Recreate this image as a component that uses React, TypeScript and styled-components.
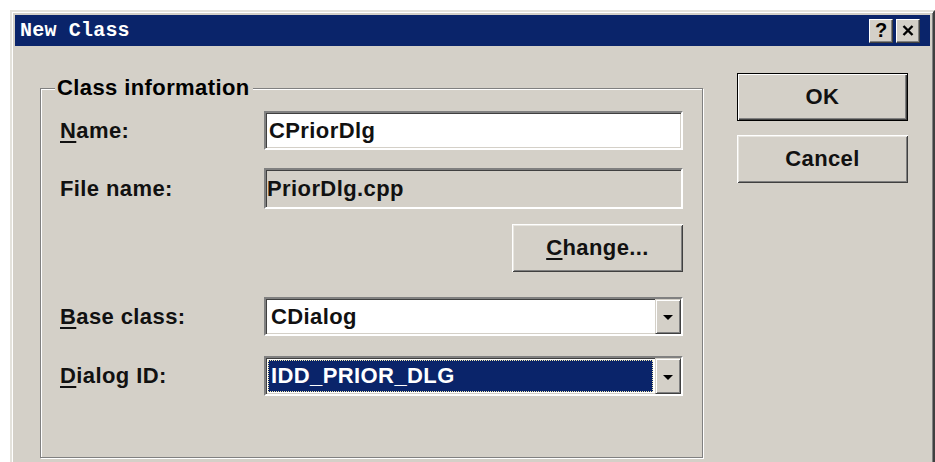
import * as React from "react";
import styled, { createGlobalStyle } from "styled-components";

const GlobalStyle = createGlobalStyle`
  html, body {
    margin: 0;
    padding: 0;
    background: #ffffff;
    overflow: hidden;
  }
  body {
    font-family: "Liberation Sans", Arial, sans-serif;
  }
`;

const Window = styled.div`
  box-sizing: border-box;
  margin: 10px 0 0 10px;
  width: 925px;
  height: 480px;
  padding: 3px;
  background: #d4d0c8;
  border: 2px solid;
  border-color: #e4e2dc #404040 #404040 #e4e2dc;
  box-shadow: inset 1px 1px 0 #ffffff, inset -1px -1px 0 #808080;
`;

const TitleBar = styled.div`
  display: flex;
  align-items: center;
  height: 31px;
  padding: 0 10px 0 5px;
  background: #0a246a;
`;

const Title = styled.div`
  flex: 1;
  font-family: "Liberation Mono", "Courier New", monospace;
  font-weight: bold;
  font-size: 20px;
  color: #ffffff;
  letter-spacing: 0.2px;
`;

const CaptionButtons = styled.div`
  display: flex;
  gap: 3px;
`;

const CaptionButton = styled.div`
  box-sizing: border-box;
  width: 24px;
  height: 24px;
  display: flex;
  align-items: center;
  justify-content: center;
  background: #d4d0c8;
  border: 1px solid;
  border-color: #ffffff #404040 #404040 #ffffff;
  box-shadow: inset -1px -1px 0 #808080;
  font-family: "Liberation Sans", Arial, sans-serif;
  font-weight: bold;
  font-size: 20px;
  color: #000;
`;

const Body = styled.div`
  display: flex;
  align-items: flex-start;
  gap: 34px;
  padding: 27px 20px 0 25px;
`;

const Group = styled.fieldset`
  box-sizing: border-box;
  margin: 4px 0 0 0;
  width: 663px;
  min-width: 0;
  padding: 12px 19px 61px 19px;
  border: 1px solid #808080;
  box-shadow: inset 1px 1px 0 #ffffff, 1px 1px 0 #ffffff;
`;

const Legend = styled.legend`
  margin-left: -5px;
  padding: 0 3px 0 2px;
  background: #d4d0c8;
  font-weight: bold;
  font-size: 22px;
  line-height: 22px;
  letter-spacing: 0.4px;
  color: #000;
`;

const Row = styled.div<{ $gap?: number; $end?: boolean }>`
  display: flex;
  align-items: center;
  justify-content: ${(p) => (p.$end ? "flex-end" : "flex-start")};
  margin-top: ${(p) => p.$gap ?? 0}px;
`;

const Label = styled.label`
  width: 204px;
  flex: none;
  font-weight: bold;
  font-size: 22px;
  letter-spacing: 0.4px;
  color: #111;

  u {
    text-decoration-thickness: 2px;
    text-underline-offset: 3px;
  }
`;

const Edit = styled.div<{ $h: number; $readOnly?: boolean }>`
  box-sizing: border-box;
  width: 419px;
  height: ${(p) => p.$h}px;
  display: flex;
  align-items: center;
  background: ${(p) => (p.$readOnly ? "#d4d0c8" : "#ffffff")};
  border: 2px solid;
  border-color: #808080 #ffffff #ffffff #808080;
  box-shadow: inset 1px 1px 0 #404040, inset -1px -1px 0 #d4d0c8;
  font-weight: bold;
  font-size: 22px;
  letter-spacing: 0.4px;
  color: #111;
  padding: 0 3px 0 ${(p) => (p.$readOnly ? 1 : 3)}px;
`;

const Combo = styled.div<{ $h: number }>`
  box-sizing: border-box;
  width: 419px;
  height: ${(p) => p.$h}px;
  display: flex;
  align-items: stretch;
  background: #ffffff;
  border: 2px solid;
  border-color: #808080 #ffffff #ffffff #808080;
  box-shadow: inset 1px 1px 0 #404040, inset -1px -1px 0 #d4d0c8;
`;

const ComboValue = styled.div<{ $selected?: boolean }>`
  flex: 1;
  display: flex;
  align-items: center;
  margin: 2px;
  padding-left: 3px;
  font-weight: bold;
  font-size: 22px;
  letter-spacing: 0.4px;
  color: ${(p) => (p.$selected ? "#ffffff" : "#111")};
  background: ${(p) => (p.$selected ? "#0a246a" : "transparent")};
  outline: ${(p) => (p.$selected ? "1px dotted #f0e8b0" : "none")};
  outline-offset: -1px;
`;

const DropButton = styled.div`
  box-sizing: border-box;
  width: 26px;
  flex: none;
  display: flex;
  align-items: center;
  justify-content: center;
  background: #d4d0c8;
  border: 1px solid;
  border-color: #d4d0c8 #404040 #404040 #d4d0c8;
  box-shadow: inset 1px 1px 0 #ffffff, inset -1px -1px 0 #808080;
`;

const Arrow = styled.span`
  width: 0;
  height: 0;
  margin-top: 2px;
  border-left: 5px solid transparent;
  border-right: 5px solid transparent;
  border-top: 5px solid #000;
`;

const PushButton = styled.button<{ $default?: boolean; $h: number }>`
  box-sizing: border-box;
  width: 171px;
  height: ${(p) => p.$h}px;
  padding: 0;
  background: #d4d0c8;
  border: ${(p) => (p.$default ? "1px solid #000" : "none")};
  box-shadow: ${(p) =>
    p.$default
      ? "inset 1px 1px 0 #ffffff, inset -1px -1px 0 #404040, inset -2px -2px 0 #808080"
      : "inset 1px 1px 0 #ffffff, inset -1px -1px 0 #404040, inset 2px 2px 0 #e8e6e0, inset -2px -2px 0 #808080"};
  font-family: "Liberation Sans", Arial, sans-serif;
  font-weight: bold;
  font-size: 22px;
  letter-spacing: 0.4px;
  color: #111;

  u {
    text-decoration-thickness: 2px;
    text-underline-offset: 3px;
  }
`;

const SideColumn = styled.div`
  display: flex;
  flex-direction: column;
  gap: 14px;
  width: 171px;
`;

export default function App() {
  return (
    <>
      <GlobalStyle />
      <Window>
        <TitleBar>
          <Title>New Class</Title>
          <CaptionButtons>
            <CaptionButton>?</CaptionButton>
            <CaptionButton>
              <svg width="12" height="11" viewBox="0 0 12 11">
                <path d="M1.5 1 L10.5 10 M10.5 1 L1.5 10" stroke="#000" strokeWidth="2.4" />
              </svg>
            </CaptionButton>
          </CaptionButtons>
        </TitleBar>
        <Body>
          <Group>
            <Legend>Class information</Legend>
            <Row>
              <Label>
                <u>N</u>ame:
              </Label>
              <Edit $h={39}>CPriorDlg</Edit>
            </Row>
            <Row $gap={18}>
              <Label>File name:</Label>
              <Edit $h={41} $readOnly>
                PriorDlg.cpp
              </Edit>
            </Row>
            <Row $gap={15} $end>
              <PushButton $h={48}>
                <u>C</u>hange...
              </PushButton>
            </Row>
            <Row $gap={25}>
              <Label>
                <u>B</u>ase class:
              </Label>
              <Combo $h={39}>
                <ComboValue>CDialog</ComboValue>
                <DropButton>
                  <Arrow />
                </DropButton>
              </Combo>
            </Row>
            <Row $gap={20}>
              <Label>
                <u>D</u>ialog ID:
              </Label>
              <Combo $h={40}>
                <ComboValue $selected>IDD_PRIOR_DLG</ComboValue>
                <DropButton>
                  <Arrow />
                </DropButton>
              </Combo>
            </Row>
          </Group>
          <SideColumn>
            <PushButton $default $h={48}>
              OK
            </PushButton>
            <PushButton $h={48}>Cancel</PushButton>
          </SideColumn>
        </Body>
      </Window>
    </>
  );
}
